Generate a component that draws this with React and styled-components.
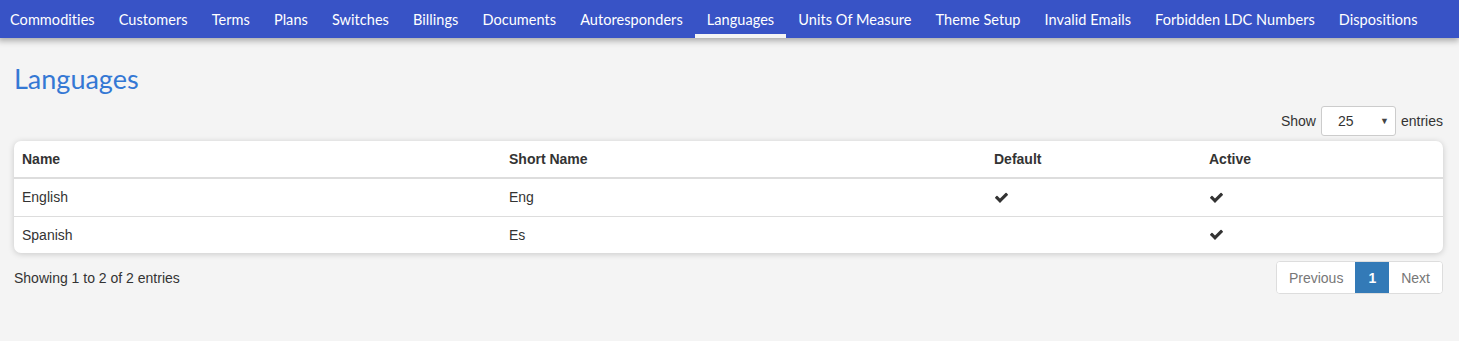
import React from 'react';
import styled, { createGlobalStyle } from 'styled-components';

const GlobalStyle = createGlobalStyle`
  html, body {
    margin: 0;
    padding: 0;
    background: #f4f4f4;
    font-family: "Liberation Sans", Arial, sans-serif;
    font-size: 14px;
    color: #333;
  }
`;

const navItems = [
  'Commodities',
  'Customers',
  'Terms',
  'Plans',
  'Switches',
  'Billings',
  'Documents',
  'Autoresponders',
  'Languages',
  'Units Of Measure',
  'Theme Setup',
  'Invalid Emails',
  'Forbidden LDC Numbers',
  'Dispositions',
];

const columns = [
  { label: 'Name', width: '487px' },
  { label: 'Short Name', width: '485px' },
  { label: 'Default', width: '215px' },
  { label: 'Active', width: '242px' },
];

const rows = [
  { name: 'English', short: 'Eng', isDefault: true, active: true },
  { name: 'Spanish', short: 'Es', isDefault: false, active: true },
];

const NavBar = styled.nav`
  display: flex;
  height: 38px;
  background: #3853c6;
  box-shadow: 0 3px 6px rgba(0, 0, 0, 0.3);
  margin-left: -2px;
`;

const NavItem = styled.a`
  display: flex;
  align-items: center;
  padding: 4px 12px 0;
  height: 38px;
  box-sizing: border-box;
  font-family: Lato, "Noto Sans", sans-serif;
  font-size: 14.5px;
  letter-spacing: 0.06px;
  color: #fff;
  text-decoration: none;
  white-space: nowrap;
  border-bottom: 4px solid ${(p) => (p.$active ? '#f4f4f4' : 'transparent')};
`;

const Content = styled.main`
  padding: 0 16px 0 14px;
`;

const Title = styled.h1`
  margin: 26px 0 0;
  font-family: Lato, "Noto Sans", sans-serif;
  font-weight: 400;
  font-size: 27px;
  line-height: 30px;
  color: #3478d4;
`;

const LengthBar = styled.div`
  display: flex;
  justify-content: flex-end;
  align-items: center;
  gap: 4px;
  margin-top: 12px;
  height: 30px;
`;

const SelectBox = styled.div`
  position: relative;
  width: 75px;
  height: 30px;
  box-sizing: border-box;
  border: 1px solid #ccc;
  border-radius: 3px;
  background: #fff;
  display: flex;
  align-items: center;
  padding-left: 16px;
  margin: 0 1px;
`;

const Caret = styled.span`
  position: absolute;
  right: 6px;
  top: 9px;
  font-size: 9px;
  color: #444;
`;

const Card = styled.div`
  margin-top: 5px;
  background: #fff;
  border-radius: 7px;
  box-shadow: 0 1px 6px rgba(0, 0, 0, 0.18);
  overflow: hidden;
`;

const Table = styled.table`
  width: 100%;
  border-collapse: collapse;
  table-layout: fixed;
`;

const Th = styled.th`
  box-sizing: border-box;
  text-align: left;
  font-weight: 700;
  padding: 0 8px;
  height: 37px;
  border-bottom: 2px solid #ddd;
  width: ${(p) => p.$w};
`;

const Td = styled.td`
  padding: 0 8px;
  height: 36.5px;
  border-top: 1px solid #ddd;
`;

const Footer = styled.div`
  display: flex;
  justify-content: space-between;
  align-items: center;
  margin-top: 8px;
`;

const Pager = styled.div`
  display: flex;
  border: 1px solid #ddd;
  border-radius: 4px;
  overflow: hidden;
  height: 33px;
  box-sizing: border-box;
  background: #fff;
`;

const PageButton = styled.span`
  display: flex;
  align-items: center;
  padding: 0 ${(p) => (p.$current ? '13px' : '12px')};
  color: ${(p) => (p.$current ? '#fff' : '#777')};
  background: ${(p) => (p.$current ? '#337ab7' : '#fff')};
  font-weight: ${(p) => (p.$current ? 700 : 400)};
`;

const Check = () => (
  <svg width="15" height="15" viewBox="0 0 1792 1792" style={{ display: 'block' }}>
    <path
      fill="#333"
      d="M1671 566q0 40-28 68l-724 724-136 136q-28 28-68 28t-68-28l-136-136-362-362q-28-28-28-68t28-68l136-136q28-28 68-28t68 28l294 295 656-657q28-28 68-28t68 28l136 136q28 28 28 68z"
    />
  </svg>
);

export default function App() {
  return (
    <>
      <GlobalStyle />
      <NavBar>
        {navItems.map((item) => (
          <NavItem key={item} $active={item === 'Languages'}>
            {item}
          </NavItem>
        ))}
      </NavBar>
      <Content>
        <Title>Languages</Title>
        <LengthBar>
          Show
          <SelectBox>
            25
            <Caret>▼</Caret>
          </SelectBox>
          entries
        </LengthBar>
        <Card>
          <Table>
            <thead>
              <tr>
                {columns.map((c) => (
                  <Th key={c.label} $w={c.width}>
                    {c.label}
                  </Th>
                ))}
              </tr>
            </thead>
            <tbody>
              {rows.map((r) => (
                <tr key={r.name}>
                  <Td>{r.name}</Td>
                  <Td>{r.short}</Td>
                  <Td>{r.isDefault && <Check />}</Td>
                  <Td>{r.active && <Check />}</Td>
                </tr>
              ))}
            </tbody>
          </Table>
        </Card>
        <Footer>
          <span>Showing 1 to 2 of 2 entries</span>
          <Pager>
            <PageButton>Previous</PageButton>
            <PageButton $current>1</PageButton>
            <PageButton>Next</PageButton>
          </Pager>
        </Footer>
      </Content>
    </>
  );
}
